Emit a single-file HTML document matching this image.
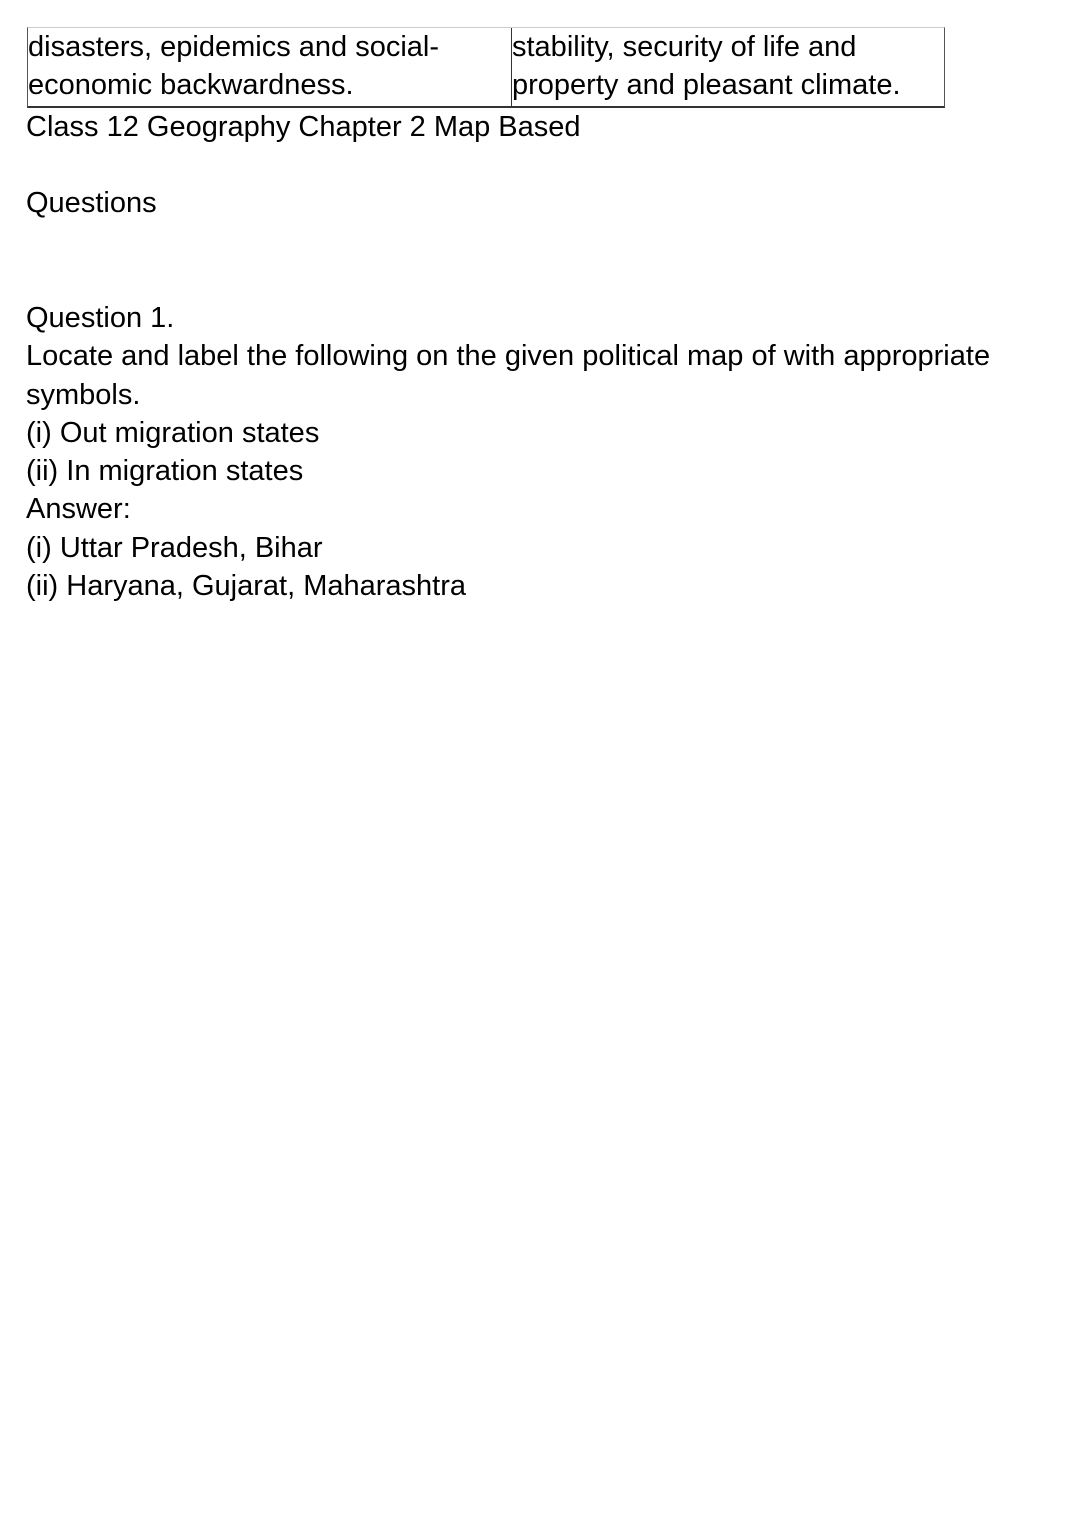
<!DOCTYPE html>
<html><head><style>
body{margin:0;background:#fff;width:1080px;height:1527px;overflow:hidden;font-family:"Liberation Sans",sans-serif;font-size:29px;color:#000}
.t{position:absolute;left:27px;top:27px;width:918px;height:81px;border:1px solid #555;border-top-color:#ccc;border-bottom:2px solid #333;box-sizing:border-box}
.c{position:absolute;top:0;line-height:38px;white-space:nowrap}
.l{position:absolute;left:26px;line-height:38.3px;white-space:nowrap}
</style></head><body>
<div class="t">
<div class="c" style="left:0;top:0">disasters, epidemics and social-<br>economic backwardness.</div>
<div style="position:absolute;left:483px;top:0;bottom:0;border-left:1px solid #333"></div>
<div class="c" style="left:484px;top:0">stability, security of life and<br>property and pleasant climate.</div>
</div>
<div class="l" style="top:108px">Class 12 Geography Chapter 2 Map Based</div>
<div class="l" style="top:184px">Questions</div>
<div class="l" style="top:299px">Question 1.<br>Locate and label the following on the given political map of with appropriate<br>symbols.<br>(i) Out migration states<br>(ii) In migration states<br>Answer:<br>(i) Uttar Pradesh, Bihar<br>(ii) Haryana, Gujarat, Maharashtra</div>
</body></html>
